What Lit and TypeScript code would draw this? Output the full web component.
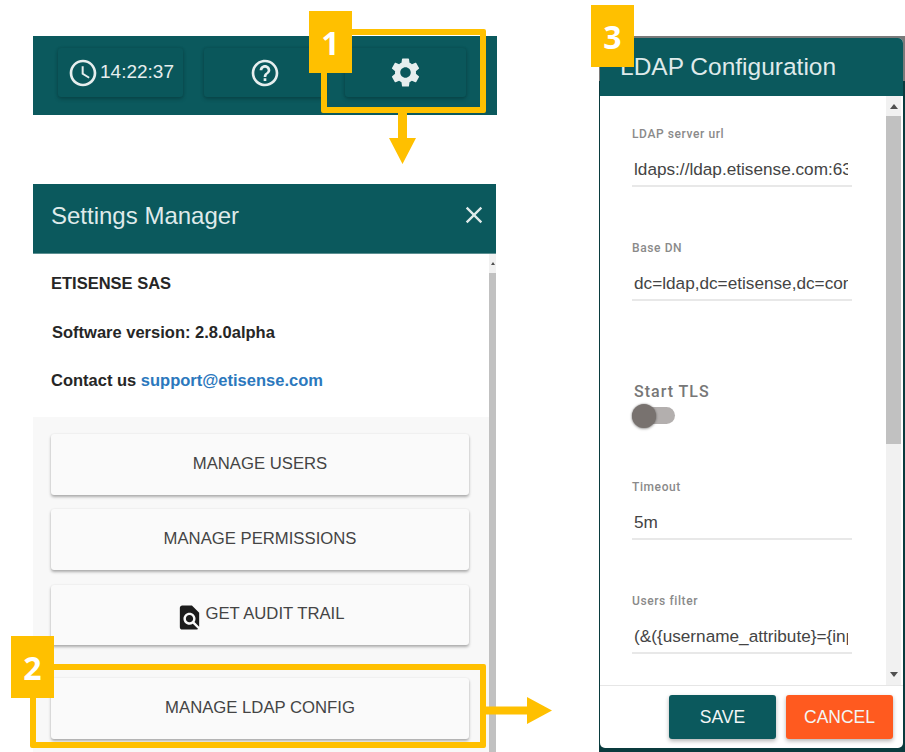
import { LitElement, html, css, svg } from "lit";
import { customElement } from "lit/decorators.js";

const ic = (size: number, cls: string, d: any) => html`<svg class=${cls} width=${size} height=${size} viewBox="0 0 24 24">${d}</svg>`;
const clock = svg`<path d="M11.99 2C6.47 2 2 6.48 2 12s4.47 10 9.99 10C17.52 22 22 17.52 22 12S17.52 2 11.99 2zM12 20c-4.42 0-8-3.58-8-8s3.58-8 8-8 8 3.58 8 8-3.58 8-8 8z"/><path d="M12.5 7H11v6l5.25 3.15.75-1.23-4.5-2.67z"/>`;
const help = svg`<path d="M11 18h2v-2h-2v2zm1-16C6.48 2 2 6.48 2 12s4.48 10 10 10 10-4.48 10-10S17.52 2 12 2zm0 18c-4.41 0-8-3.59-8-8s3.59-8 8-8 8 3.59 8 8-3.59 8-8 8zm0-14c-2.21 0-4 1.79-4 4h2c0-1.1.9-2 2-2s2 .9 2 2c0 2-3 1.75-3 5h2c0-2.25 3-2.5 3-5 0-2.21-1.79-4-4-4z"/>`;
const gear = svg`<path d="M19.14 12.94c.04-.3.06-.61.06-.94 0-.32-.02-.64-.07-.94l2.03-1.58c.18-.14.23-.41.12-.61l-1.92-3.32c-.12-.22-.37-.29-.59-.22l-2.39.96c-.5-.38-1.03-.7-1.62-.94l-.36-2.54c-.04-.24-.24-.41-.48-.41h-3.84c-.24 0-.43.17-.47.41l-.36 2.54c-.59.24-1.13.57-1.62.94l-2.39-.96c-.22-.08-.47 0-.59.22L2.74 8.87c-.12.21-.08.47.12.61l2.03 1.58c-.05.3-.09.63-.09.94s.02.64.07.94l-2.03 1.58c-.18.14-.23.41-.12.61l1.92 3.32c.12.22.37.29.59.22l2.39-.96c.5.38 1.03.7 1.62.94l.36 2.54c.05.24.24.41.48.41h3.84c.24 0 .44-.17.47-.41l.36-2.54c.59-.24 1.13-.56 1.62-.94l2.39.96c.22.08.47 0 .59-.22l1.92-3.32c.12-.22.07-.47-.12-.61l-2.01-1.58zM12 15.6c-1.98 0-3.6-1.62-3.6-3.6s1.62-3.6 3.6-3.6 3.6 1.62 3.6 3.6-1.62 3.6-3.6 3.6z"/>`;
const close = svg`<path d="M19 6.41L17.59 5 12 10.59 6.41 5 5 6.41 10.59 12 5 17.59 6.41 19 12 13.41 17.59 19 19 17.59 13.41 12z"/>`;
const audit = svg`<path d="M20 19.59V8l-6-6H6c-1.1 0-1.99.9-1.99 2L4 20c0 1.1.89 2 1.99 2H18c.45 0 .85-.15 1.19-.4l-4.43-4.43c-.8.52-1.74.83-2.76.83-2.76 0-5-2.24-5-5s2.24-5 5-5 5 2.24 5 5c0 1.02-.31 1.96-.83 2.75L20 19.59zM9 13c0 1.66 1.34 3 3 3s3-1.34 3-3-1.34-3-3-3-3 1.34-3 3z"/>`;

@customElement("app-root")
export class AppRoot extends LitElement {
  static styles = css`
    :host { display: block; position: relative; width: 905px; height: 752px; overflow: hidden; background: #fff; font-family: "Liberation Sans", Arial, sans-serif; color: #333; }
    * { box-sizing: border-box; }
    svg { display: block; fill: currentColor; flex: none; }
    .page { display: flex; height: 752px; }
    .left { width: 464px; margin-left: 33px; padding-top: 36px; display: flex; flex-direction: column; }
    .topbar { height: 79px; background: #0b595d; display: flex; padding: 12px 30px 0 25px; color: #e6eeee; }
    .tb { height: 49px; background: #0a575b; border-radius: 3px; display: flex; align-items: center; justify-content: center; box-shadow: 0 2px 4px rgba(0,0,0,.22), 0 0 3px rgba(0,0,0,.12); }
    .tb.clock { width: 125px; gap: 1px; font-size: 19px; }
    .tb.clock span { margin-bottom: 1px; }
    .tb.q { width: 121px; margin-left: 21px; }
    .tb.g { width: 121px; margin-left: 20px; }
    .panel { margin-top: 69px; width: 463px; flex: 1; display: flex; flex-direction: column; min-height: 0; }
    .phead { height: 70px; flex: none; background: #0b595d; color: #dfeaea; display: flex; align-items: center; justify-content: space-between; padding: 0 8px 0 18px; font-size: 24px; border-bottom: 1px solid #5b8f91; }
    .phead span { margin-bottom: 6px; }
    .phead svg { margin-top: -8px; }
    .pbody { flex: 1; display: flex; min-height: 0; }
    .pcontent { width: 456px; display: flex; flex-direction: column; }
    .info { padding: 19px 0 0 18px; height: 163px; color: #262626; font-size: 16.5px; font-weight: 700; line-height: 20px; }
    .info div { margin-bottom: 28.500px; }
    .info .sv { margin-left: 1px; }
    .info a { color: #2b78bd; text-decoration: none; }
    .actions { flex: 1; background: #f8f8f8; padding: 17px 20px 0 18px; display: flex; flex-direction: column; }
    .act { height: 61px; flex: none; background: #fafafa; border-radius: 3px; box-shadow: 0 2px 3px rgba(0,0,0,.3), 0 0 2px rgba(0,0,0,.08); display: flex; align-items: center; justify-content: center; font-size: 16.7px; color: #444; margin-bottom: 14px; padding-bottom: 2px; }
    .act.a3 { height: 60px; margin-top: 1px; margin-bottom: 33px; gap: 1px; padding-bottom: 3px; }
    .act.a3 svg { margin-top: 7px; }
    .act svg { color: #1c1c1c; }
    .sb { background: #f1f1f1; display: flex; flex-direction: column; align-items: center; flex: none; }
    .sb .up { width: 0; height: 0; border: 4px solid transparent; border-top: 0; border-bottom: 5px solid #505050; flex: none; }
    .sb .down { width: 0; height: 0; border: 4px solid transparent; border-bottom: 0; border-top: 5px solid #505050; flex: none; }
    .sb .th { background: #c1c1c1; align-self: stretch; flex: none; }
    .psb { width: 7px; padding-top: 8px; }
    .psb .up { border-width: 0 2px 3px; }
    .psb .th { margin-top: 8px; flex: 1; }
    .right { width: 306px; margin-left: 102px; margin-top: 36px; background: linear-gradient(#7a7a7a 0 45px, #0a3b3e 45px); padding: 2px 2px 4px 1px; }
    .dlg { height: 710px; background: #fff; border-radius: 5px; display: flex; flex-direction: column; overflow: hidden; }
    .dhead { height: 58px; flex: none; background: #0b595d; color: #dfeaea; font-size: 24.5px; display: flex; align-items: center; padding: 0 0 0 20px; }
    .dbody { flex: 1; min-height: 0; display: flex; justify-content: space-between; }
    .form { padding: 31px 0 0 32px; width: 252px; font-family: Roboto, "Liberation Sans", sans-serif; }
    .field { height: 60px; margin-bottom: 54px; border-bottom: 2px solid #e8e8e8; }
    .lab { height: 14px; font-size: 12px; line-height: 14px; color: #8a8a8a; font-weight: 500; letter-spacing: .6px; }
    .val { display: block; border: 0; outline: 0; padding: 0; background: none; margin: 14px 4px 0 2px; width: 214px; height: 28px; font: 17.2px/28px "Liberation Sans", Arial, sans-serif; color: #444; }
    .tls { margin-top: 81px; margin-bottom: 56px; }
    .tlab { font-size: 16px; line-height: 20px; color: #777; font-weight: 500; letter-spacing: 1px; margin-left: 2px; }
    .track { width: 43px; height: 17px; margin-top: 5px; border-radius: 9px; background: #b3afae; display: flex; align-items: center; }
    .knob { width: 24px; height: 24px; border-radius: 50%; background: #78726f; box-shadow: 0 1px 3px rgba(0,0,0,.3), 0 0 2px rgba(90,85,82,.6); flex: none; }
    .dsb { width: 15px; margin-right: 2px; height: 100%; padding-top: 8px; justify-content: flex-start; }
    .dsb .th { height: 328px; margin-top: 7px; }
    .dsb .down { margin-top: auto; margin-bottom: 8px; }
    .dfoot { height: 63px; flex: none; border-top: 1px solid #e6e6e6; display: flex; justify-content: flex-end; padding: 9px 10px 0 0; gap: 10px; }
    .btn { width: 107px; height: 44px; border-radius: 3px; display: flex; align-items: center; justify-content: center; font-size: 17.5px; box-shadow: 0 2px 4px rgba(0,0,0,.3); color: #f2f5f5; }
    .save { background: #0b595d; }
    .cancel { background: #ff5a1f; }
    .ann { position: absolute; }
    .box { border: 6px solid #ffc000; border-radius: 2px; }
    .b1 { left: 321px; top: 29px; width: 165px; height: 84px; }
    .b2 { left: 30px; top: 664px; width: 456px; height: 84px; }
    .badge { width: 43px; height: 62px; background: #ffc000; color: #fff; font: 700 32px "Open Sans", sans-serif; display: flex; align-items: center; justify-content: center; }
    .n1 { left: 309px; top: 11px; }
    .n2 { left: 11px; top: 636px; }
    .n3 { left: 591px; top: 5px; }
    .ad { left: 389px; top: 113px; fill: #ffc000; }
    .ar { left: 486px; top: 697px; fill: #ffc000; }
  `;

  field(label: string, value: string) {
    return html`<div class="field"><div class="lab">${label}</div><input class="val" readonly .value=${value} /></div>`;
  }

  render() {
    return html`
      <div class="page">
        <div class="left">
          <div class="topbar">
            <div class="tb clock">${ic(32, "", clock)}<span>14:22:37</span></div>
            <div class="tb q">${ic(32, "", help)}</div>
            <div class="tb g">${ic(35, "", gear)}</div>
          </div>
          <div class="panel">
            <div class="phead"><span>Settings Manager</span>${ic(28, "", close)}</div>
            <div class="pbody">
              <div class="pcontent">
                <div class="info">
                  <div>ETISENSE SAS</div>
                  <div class="sv">Software version: 2.8.0alpha</div>
                  <div>Contact us <a>support@etisense.com</a></div>
                </div>
                <div class="actions">
                  <div class="act">MANAGE USERS</div>
                  <div class="act">MANAGE PERMISSIONS</div>
                  <div class="act a3">${ic(29, "", audit)}<span>GET AUDIT TRAIL</span></div>
                  <div class="act">MANAGE LDAP CONFIG</div>
                </div>
              </div>
              <div class="sb psb"><div class="up"></div><div class="th"></div></div>
            </div>
          </div>
        </div>
        <div class="right">
          <div class="dlg">
            <div class="dhead">LDAP Configuration</div>
            <div class="dbody">
              <div class="form">
                ${this.field("LDAP server url", "ldaps://ldap.etisense.com:636")}
                ${this.field("Base DN", "dc=ldap,dc=etisense,dc=com")}
                <div class="tls">
                  <div class="tlab">Start TLS</div>
                  <div class="track"><div class="knob"></div></div>
                </div>
                ${this.field("Timeout", "5m")}
                ${this.field("Users filter", "(&({username_attribute}={input}))")}
              </div>
              <div class="sb dsb"><div class="up"></div><div class="th"></div><div class="down"></div></div>
            </div>
            <div class="dfoot">
              <div class="btn save">SAVE</div>
              <div class="btn cancel">CANCEL</div>
            </div>
          </div>
        </div>
      </div>
      <div class="ann box b1"></div>
      <div class="ann box b2"></div>
      <div class="ann badge n1">1</div>
      <div class="ann badge n2">2</div>
      <div class="ann badge n3">3</div>
      <svg class="ann ad" width="27" height="51" viewBox="0 0 27 51"><path d="M9 0h9v25h9L13.500 51 0 25h9z"/></svg>
      <svg class="ann ar" width="66" height="27" viewBox="0 0 66 27"><path d="M0 9.500h41V0l25 13.500L41 27v-9.500H0z"/></svg>
    `;
  }
}
